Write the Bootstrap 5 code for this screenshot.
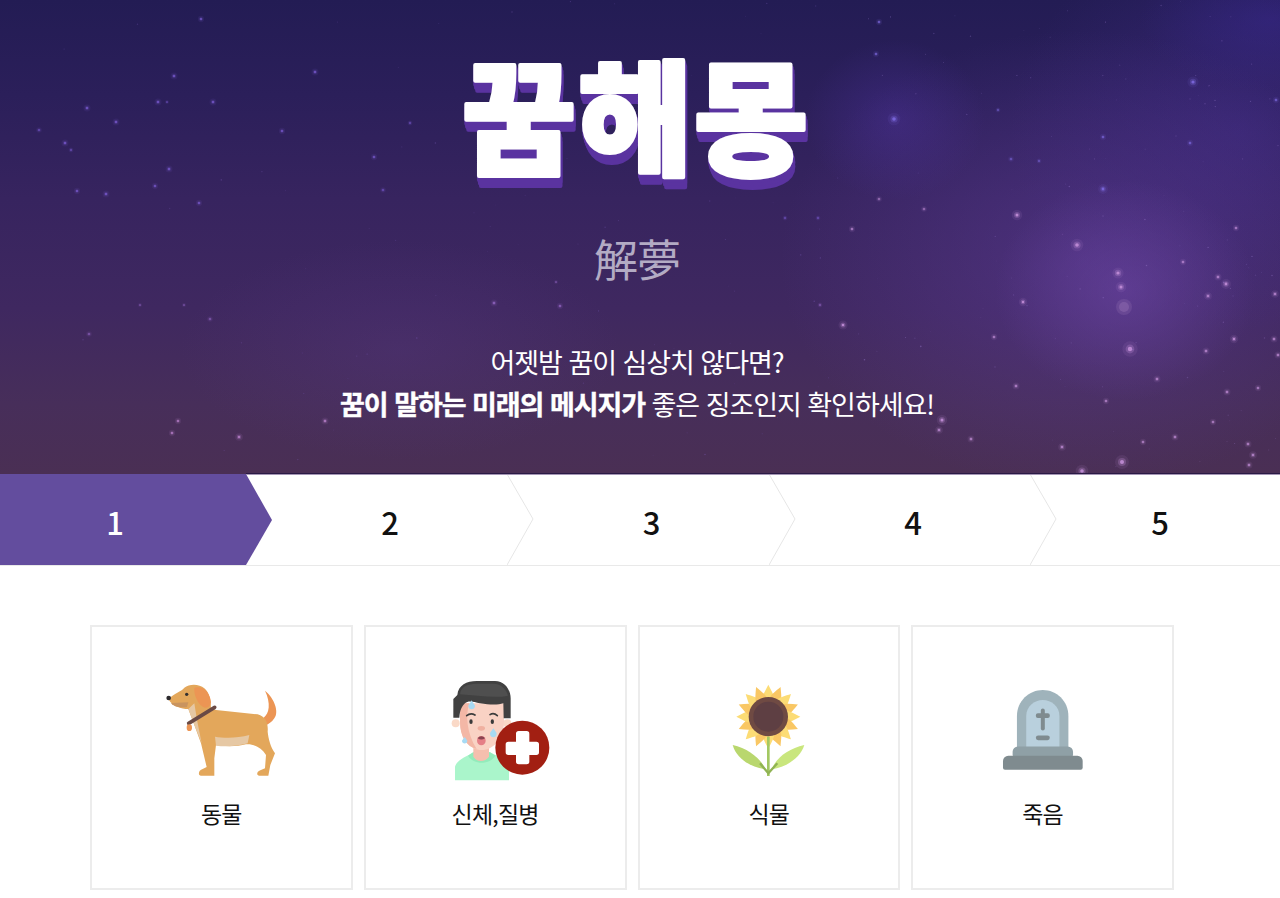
<!DOCTYPE html>
<html lang="ko">
<head>
<meta charset="utf-8">
<title>꿈해몽</title>
<link href="https://cdn.jsdelivr.net/npm/bootstrap@5.3.0/dist/css/bootstrap.min.css" rel="stylesheet">
<style>
body{font-family:"Noto Sans CJK KR","Noto Sans",sans-serif;background:#fff;color:#111;overflow-x:hidden}
.dream-hero{height:474px;position:relative;overflow:hidden;padding-right:6px;color:#fff;text-align:center;
 background:
 radial-gradient(ellipse 130px 110px at 1125px 290px,rgba(112,72,170,.5),rgba(112,72,170,0)),
 radial-gradient(ellipse 300px 230px at 1080px 260px,rgba(98,62,160,.45),rgba(98,62,160,0)),
 radial-gradient(ellipse 90px 80px at 895px 120px,rgba(78,50,160,.42),rgba(78,50,160,0)),
 radial-gradient(ellipse 230px 200px at 1240px 130px,rgba(72,48,150,.42),rgba(72,48,150,0)),
 radial-gradient(ellipse 130px 70px at 1270px 20px,rgba(50,36,130,.6),rgba(50,36,130,0)),
 radial-gradient(ellipse 220px 110px at 400px 350px,rgba(88,56,130,.3),rgba(88,56,130,0)),
 linear-gradient(180deg,#231c54 0%,#2b1f5a 20%,#37245f 42%,#3f2860 65%,#472e5a 85%,#4a2f54 100%)}
.dream-hero::after{content:"";position:absolute;left:246px;right:0;bottom:0;height:1px;background:#2a1a45}
.star-field{position:absolute;inset:0;width:100%;height:100%}
.hero-inner{position:relative}
.dream-logo{display:block;margin:0 auto;width:420px;height:186px;overflow:visible}
.dream-logo text{font-family:"Noto Sans CJK KR",sans-serif;font-size:124px;font-weight:900;letter-spacing:2px;fill:#fff;stroke:#fff;stroke-width:4px;stroke-linejoin:round;paint-order:stroke fill;text-anchor:middle}
.logo-extrude{filter:drop-shadow(1px 3px 0 #5a33a0) drop-shadow(1px 3px 0 #5a33a0) drop-shadow(0 4px 0 #5a33a0)}
.dream-hanja{font-size:44px;font-weight:400;color:#b3abc4;line-height:60px;margin-top:42px;letter-spacing:-1px}
.dream-lead{font-size:27px;line-height:42px;letter-spacing:-1.05px;margin-top:53px;font-weight:400}
.dream-lead strong{font-weight:700;-webkit-text-stroke:.4px #fff}
.step-bar{display:grid;grid-template-columns:246px 261px 262px 261px 250px;height:92px;border-bottom:1px solid #e9e9e9;position:relative;background:#fff}
.step-bar::before{content:"";position:absolute;left:246px;right:0;top:0;height:1px;background:#a596b5;z-index:3}
.step-cell{position:relative;display:flex;align-items:center;justify-content:center;font-size:31px;font-weight:500;color:#111;padding-top:5px}
.step-cell .step-num{position:relative;z-index:2}
.step-cell svg{position:absolute;top:0;left:100%;width:27px;height:91px;z-index:1}
.step-first{background:#634d9e;color:#fff;padding-right:16px}
.step-shift{padding-left:27px}
.step-last{padding-left:10px}
.topic-wrap{width:1084px;margin:59px 0 0 90px;gap:11px}
.topic-card{flex:1 1 0;height:265px;border:2px solid #ececec;border-radius:0;text-decoration:none;color:#111;font-size:23px;letter-spacing:-.8px;line-height:30px}
.topic-art{height:110px;margin-top:48px;display:flex;align-items:center;justify-content:center;width:100%}
.topic-label{margin-top:13px}
</style>
</head>
<body>
<header class="dream-hero">
 <svg class="star-field" id="stars" viewBox="0 0 1280 474" aria-hidden="true"></svg>
 <div class="hero-inner">
  <svg class="dream-logo" viewBox="0 0 420 186"><g class="logo-extrude"><text x="209" y="165">꿈해몽</text></g></svg>
  <div class="dream-hanja">解夢</div>
  <p class="dream-lead mb-0">어젯밤 꿈이 심상치 않다면?<br><strong>꿈이 말하는 미래의 메시지가</strong> 좋은 징조인지 확인하세요!</p>
 </div>
</header>
<nav class="step-bar">
 <div class="step-cell step-first"><span class="step-num">1</span>
  <svg viewBox="0 0 27 91"><path d="M0,0 L26,46 L0,91Z" fill="#634d9e"/></svg></div>
 <div class="step-cell step-shift"><span class="step-num">2</span>
  <svg viewBox="0 0 27 91"><path d="M0,0 L26,45 L0,91" fill="#fff" stroke="#e6e6e6" stroke-width="1"/></svg></div>
 <div class="step-cell step-shift"><span class="step-num">3</span>
  <svg viewBox="0 0 27 91"><path d="M0,0 L26,45 L0,91" fill="#fff" stroke="#e6e6e6" stroke-width="1"/></svg></div>
 <div class="step-cell step-shift"><span class="step-num">4</span>
  <svg viewBox="0 0 27 91"><path d="M0,0 L26,45 L0,91" fill="#fff" stroke="#e6e6e6" stroke-width="1"/></svg></div>
 <div class="step-cell step-last"><span class="step-num">5</span></div>
</nav>
<main class="topic-wrap d-flex">
 <a class="card topic-card align-items-center" href="#">
  <div class="topic-art">
   <svg width="140" height="110" viewBox="0 0 420 330" aria-hidden="true">
    <path d="M342,47 C370,70 385,110 370,130 C362,142 352,148 345,150 L338,128 C355,115 360,85 342,47Z" fill="#ec9554"/>
    <path d="M52,72 C70,55 90,50 100,38 C115,26 145,26 160,40 C175,52 180,80 180,100 L195,105 L320,118 C345,125 352,145 350,170 C352,190 358,215 372,235 L358,270 L352,302 L325,302 C316,302 316,290 328,286 L342,280 L345,240 C330,215 300,205 285,208 C260,215 220,215 195,210 L190,250 L190,302 L150,302 C140,302 142,285 155,282 L167,276 L150,205 L130,150 L112,102 C90,102 65,95 52,72Z" fill="#e3a75b"/>
    <path d="M192,185 C220,190 260,190 295,180 L290,205 C260,215 220,215 195,212Z" fill="#e6c8a4"/>
    <path d="M112,102 L130,85 L138,135 L152,205 L130,150Z" fill="#e6c8a4"/>
    <path d="M60,84 L112,82 L108,96 C90,98 70,98 60,84Z" fill="#c9945f"/>
    <path d="M130,38 C160,30 178,55 180,82 C178,98 165,102 155,95 C140,85 128,60 130,38Z" fill="#ec9554"/>
    <path d="M113,145 L191,97" stroke="#6a4a45" stroke-width="11" stroke-linecap="round"/>
    <ellipse cx="115" cy="158" rx="8" ry="10" fill="#ec9554"/>
    <circle cx="107" cy="58" r="5" fill="#33302f"/>
    <circle cx="53" cy="69" r="7" fill="#2d2a2e"/>
   </svg>
  </div>
  <div class="topic-label">동물</div>
 </a>
 <a class="card topic-card align-items-center" href="#">
  <div class="topic-art">
   <svg width="120" height="110" viewBox="-15 0 360 330" aria-hidden="true">
    <path d="M45,316 L45,275 C50,255 80,245 100,232 L150,232 C170,245 205,250 207,275 L207,316Z" fill="#aaf5cb"/>
    <path d="M84,242 L100,232 L150,232 L166,242 C150,270 100,270 84,242Z" fill="#93ebbb"/>
    <path d="M100,200 H147 V245 C135,262 110,262 100,245Z" fill="#f5bfae"/>
    <circle cx="47" cy="145" r="12" fill="#fad9c7"/><circle cx="202" cy="145" r="12" fill="#fad9c7"/>
    <path d="M60,85 H192 V140 C192,190 160,225 125,225 C90,225 60,190 60,140Z" fill="#f9d2c4"/>
    <path d="M60,85 H88 C76,120 80,175 110,222 C80,215 60,185 60,140Z" fill="#f3b7a6"/>
    <path d="M40,128 V72 L52,60 C55,30 80,18 110,18 H165 C195,18 212,45 212,70 V130 H191 L190,85 C175,90 150,90 120,85 C100,80 85,75 75,85 C65,95 60,105 58,128Z" fill="#414141"/>
    <path d="M60,58 C62,36 82,26 110,26 H160 C185,26 200,45 204,62 C170,70 110,62 60,58Z" fill="#4f4f4f"/>
    <path d="M80,122 Q92,112 105,120 M150,119 Q161,112 172,122" fill="none" stroke="#3c3c3c" stroke-width="5" stroke-linecap="round"/>
    <ellipse cx="93" cy="140" rx="5" ry="7" fill="#3a3a3a"/><ellipse cx="157" cy="140" rx="5" ry="7" fill="#3a3a3a"/>
    <ellipse cx="124" cy="160" rx="11" ry="7" fill="#f0b0a0"/>
    <ellipse cx="124" cy="197" rx="13" ry="14" fill="#e57f87"/>
    <path d="M113,190 C118,182 130,182 135,190 C128,195 120,195 113,190Z" fill="#8a4450"/>
    <path d="M95,76 C100,86 105,90 105,92 C105,106 85,106 85,92 C85,90 90,86 95,76Z" fill="#a7daf3"/>
    <path d="M160,160 C165,168 170,172 170,176 C170,190 150,190 150,176 C150,172 155,168 160,160Z" fill="#a7daf3"/>
    <path d="M74,186 C78,192 82,196 82,198 C82,208 66,208 66,198 C66,196 70,192 74,186Z" fill="#a7daf3"/>
    <circle cx="247" cy="218" r="81" fill="#a21f12"/>
    <path d="M228,176 a8,8 0 0 1 8,-8 h24 a8,8 0 0 1 8,8 v24 h21 a8,8 0 0 1 8,8 v24 a8,8 0 0 1 -8,8 h-21 v20 a8,8 0 0 1 -8,8 h-24 a8,8 0 0 1 -8,-8 v-20 h-23 a8,8 0 0 1 -8,-8 v-24 a8,8 0 0 1 8,-8 h23Z" fill="#fff"/>
   </svg>
  </div>
  <div class="topic-label">신체,질병</div>
 </a>
 <a class="card topic-card align-items-center" href="#">
  <div class="topic-art">
   <svg width="90" height="100" viewBox="-4 0 270 300" aria-hidden="true">
    <g id="petals"></g>
    <path d="M129,170 V288" stroke="#a3c862" stroke-width="8"/>
    <path d="M22,195 C70,205 110,240 120,268 C80,262 35,240 22,195Z" fill="#b9d76e"/>
    <path d="M237,195 C190,205 150,235 140,268 C180,262 225,235 237,195Z" fill="#c9e67d"/>
    <path d="M104,250 L129,280 L156,250" fill="none" stroke="#90b354" stroke-width="7"/>
    <circle cx="129" cy="110" r="59" fill="#6f4a43"/>
    <circle cx="129" cy="110" r="45" fill="#5e3f43"/>
   </svg>
  </div>
  <div class="topic-label">식물</div>
 </a>
 <a class="card topic-card align-items-center" href="#">
  <div class="topic-art">
   <svg width="83" height="82" viewBox="870 60 250 245" aria-hidden="true">
    <path d="M918,240 V140 C918,95 955,62 996,62 C1037,62 1073,95 1073,140 V240Z" fill="#9fb3bb"/>
    <path d="M946,236 V140 C946,112 970,92 996,92 C1022,92 1046,112 1046,140 V236Z" fill="#b9d0dd"/>
    <rect x="905" y="232" width="182" height="40" rx="16" fill="#8fa0a6"/>
    <path d="M876,276 a16,16 0 0 1 16,-16 h208 a16,16 0 0 1 16,16 v20 a6,6 0 0 1 -6,6 h-228 a6,6 0 0 1 -6,-6Z" fill="#7f8b8f"/>
    <rect x="990" y="118" width="12" height="66" rx="6" fill="#7f8b8f"/>
    <rect x="975" y="132" width="42" height="14" rx="6" fill="#7f8b8f"/>
    <rect x="975" y="199" width="42" height="14" rx="7" fill="#7f8b8f"/>
   </svg>
  </div>
  <div class="topic-label">죽음</div>
 </a>
</main>
<script src="https://cdn.jsdelivr.net/npm/bootstrap@5.3.0/dist/js/bootstrap.bundle.min.js"></script>
<script>
(function(){
 var NS='http://www.w3.org/2000/svg';
 var petals=document.getElementById('petals');
 for(var i=0;i<16;i++){
  var p=document.createElementNS(NS,'path');
  p.setAttribute('d','M129,14 C137,30 147,45 147,60 L111,60 C111,45 121,30 129,14Z');
  p.setAttribute('fill',i%2?'#f9c764':'#fcdc75');
  p.setAttribute('transform','rotate('+(i*22.5)+' 129 110)');
  petals.appendChild(p);
 }
 var svg=document.getElementById('stars');
 function add(x,y,r,col,op){var c=document.createElementNS(NS,'circle');c.setAttribute('cx',x);c.setAttribute('cy',y);c.setAttribute('r',r);c.setAttribute('fill',col);c.setAttribute('opacity',op);svg.appendChild(c);}
 function star(x,y,s){
  var t=y/474,col=t<.5?'#7f5fd8':(t<.75?'#9a6ccc':'#c488d6');
  if(x>840)col=t<.4?'#7f6ae0':'#c690da';
  add(x,y,s*3.5,col,.1);add(x,y,s*2,col,.28);add(x,y,s,col,.85);
 }
 var list=[[201,19,.9],[174,76,1],[87,108,1],[116,122,1],[158,102,1],[167,102,.6],[213,102,1],[282,131,.9],[315,72,1],[39,130,.8],[65,143,1],[71,150,.7],[169,169,1],[155,186,.9],[77,191,.9],[106,194,1],[199,203,.9],[374,157,.9],[410,123,.7],[383,190,.8],[178,421,.9],[172,433,.9],[239,437,1.1],[325,421,1],[210,319,.8],[89,334,.8],[140,305,.6],[184,305,.6],
 [494,303,1],[560,306,.9],[556,282,.6],[785,218,.7],[818,218,.7],[820,305,.7],
 [894,119,1.8],[1193,82,1.6],[1077,245,1.8],[1103,189,1.4],[1017,215,1.5],[1118,273,1.6],[1121,287,1.5],[1130,349,2.2],[1226,284,1.4],[1208,296,1.1],[1218,277,1],[1275,294,1.1],[1234,339,1.2],[1206,351,1],[1274,339,1],[1278,355,1],[1157,379,1],[1227,392,1],[1258,388,.9],[1213,422,.9],[1175,437,1],[1143,442,.9],[1122,462,2],[1082,471,1.8],[1062,447,1.1],[1248,444,1],[1253,455,1.1],[1249,465,1],[1016,386,1],[1106,401,.9],[942,420,1.5],[939,430,1.1],[971,439,1],[1023,302,1.2],[994,337,.9],[843,325,1.3],[852,229,.9],[879,199,.8],[924,209,.8],[879,22,.9],[876,54,.9],[1190,143,.9],[1183,262,.9],[1236,228,.9],[1276,100,.9],[1103,137,.9],[1011,159,.8],[1039,161,.7],[998,110,.7]];
 list.forEach(function(s){star(s[0],s[1],s[2]);});
 add(1124,307,8,'#c8a0d8',.14);add(1124,307,5,'#c8a0d8',.2);
 var seed=12345;function rnd(){seed=(seed*16807)%2147483647;return seed/2147483647;}
 for(var j=0;j<200;j++){
  var x=rnd(),y=rnd()*474;x=Math.pow(x,.5)*1280;
  add(x.toFixed(1),y.toFixed(1),(.4+rnd()*.4).toFixed(2),x>840?'#a888e0':'#8060c0',(.12+rnd()*.28).toFixed(2));
 }
})();
</script>
</body>
</html>
